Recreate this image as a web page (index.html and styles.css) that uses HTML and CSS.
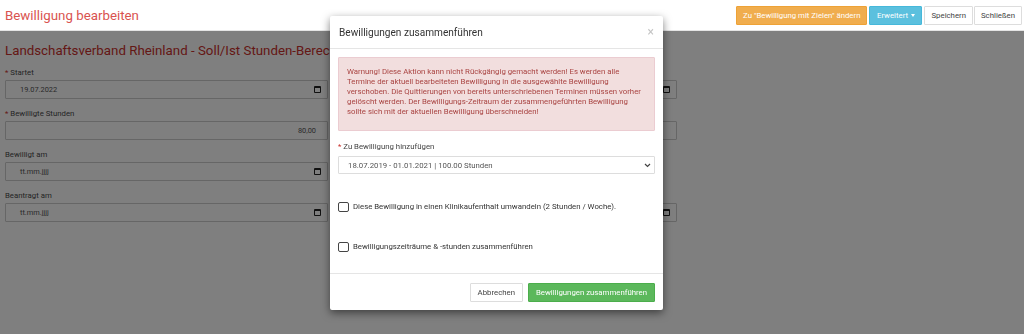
FILE: index.html
```html
<!DOCTYPE html>
<html lang="de">
<head>
<meta charset="utf-8">
<title>Bewilligung bearbeiten</title>
<link rel="stylesheet" href="styles.css">
</head>
<body>
<header class="topbar">
  <h1 class="page-title">Bewilligung bearbeiten</h1>
  <div class="btn-group">
    <button class="btn btn-warning">Zu "Bewilligung mit Zielen" ändern</button>
    <button class="btn btn-info">Erweitert <span class="caret"></span></button>
    <button class="btn btn-default">Speichern</button>
    <button class="btn btn-default">Schließen</button>
  </div>
</header>

<main class="content">
  <h2 class="section-title">Landschaftsverband Rheinland - Soll/Ist Stunden-Berechnung</h2>
  <div class="form-grid">
    <div class="form-col">
      <div class="field">
        <label class="field-label"><span class="req">*</span> Startet</label>
        <div class="input date"><span>19.07.2022</span><span class="cal"></span></div>
      </div>
      <div class="field">
        <label class="field-label"><span class="req">*</span> Bewilligte Stunden</label>
        <div class="input num"><span>80,00</span></div>
      </div>
      <div class="field">
        <label class="field-label">Bewilligt am</label>
        <div class="input date"><span>tt.mm.<u>jjjj</u></span><span class="cal"></span></div>
      </div>
      <div class="field">
        <label class="field-label">Beantragt am</label>
        <div class="input date"><span>tt.mm.<u>jjjj</u></span><span class="cal"></span></div>
      </div>
    </div>
    <div class="form-col">
      <div class="field">
        <label class="field-label">Endet</label>
        <div class="input date"><span>tt.mm.<u>jjjj</u></span><span class="cal"></span></div>
      </div>
      <div class="field">
        <label class="field-label">Verbrauchte Stunden</label>
        <div class="input num"><span></span></div>
      </div>
      <div class="field">
        <label class="field-label">&nbsp;</label>
        <div class="spacer"></div>
      </div>
      <div class="field">
        <label class="field-label">Genehmigt am</label>
        <div class="input date"><span>tt.mm.<u>jjjj</u></span><span class="cal"></span></div>
      </div>
    </div>
  </div>
</main>

<div class="backdrop"></div>

<div class="modal" role="dialog">
  <div class="modal-header">
    <h3 class="modal-title">Bewilligungen zusammenführen</h3>
    <span class="close">×</span>
  </div>
  <div class="modal-body">
    <div class="alert">Warnung! Diese Aktion kann nicht Rückgängig gemacht werden! Es werden alle Termine der aktuell bearbeiteten Bewilligung in die ausgewählte Bewilligung verschoben. Die Quittierungen von bereits unterschriebenen Terminen müssen vorher gelöscht werden. Der Bewilligungs-Zeitraum der zusammengeführten Bewilligung sollte sich mit der aktuellen Bewilligung überschneiden!</div>
    <label class="modal-label"><span class="req">*</span> Zu Bewilligung hinzufügen</label>
    <div class="select">
      <span>18.07.2019 - 01.01.2021 | 100.00 Stunden</span>
      <svg class="chev" width="7" height="5" viewBox="0 0 7 5"><path d="M1 1 L3.5 3.5 L6 1" fill="none" stroke="#444" stroke-width="1.2"/></svg>
    </div>
    <label class="check check-first"><span class="box"></span>Diese Bewilligung in einen Klinikaufenthalt umwandeln (2 Stunden / Woche).</label>
    <label class="check check-second"><span class="box"></span>Bewilligungszeiträume &amp; -stunden zusammenführen</label>
  </div>
  <div class="modal-footer">
    <button class="btn btn-default btn-lg">Abbrechen</button>
    <button class="btn btn-success btn-lg">Bewilligungen zusammenführen</button>
  </div>
</div>
</body>
</html>
```

FILE: styles.css
```css
* { box-sizing: border-box; }

html, body {
  margin: 0;
  padding: 0;
  background: #fff;
  font-family: Roboto, "Liberation Sans", Arial, sans-serif;
  color: #333;
  font-size: 7.8px;
}

.topbar {
  position: relative;
  z-index: 20;
  height: 31px;
  background: #fff;
  border-bottom: 1px solid #e4e4e4;
  display: flex;
  align-items: center;
  justify-content: space-between;
  padding: 0 2px 0 5px;
}

.page-title {
  margin: 0;
  font-weight: 400;
  font-size: 13.3px;
  color: #d9534f;
}

.btn-group {
  display: flex;
  gap: 2px;
}

.btn {
  font-family: inherit;
  font-size: 7.8px;
  height: 19px;
  padding: 0 6.5px;
  border: 1px solid transparent;
  border-radius: 1px;
  color: #fff;
  cursor: pointer;
  line-height: 17px;
}

.btn-warning { background: #f0ad4e; border-color: #eea236; padding: 0 6px; }
.btn-info { background: #5bc0de; border-color: #46b8da; padding: 0 6.5px; }
.btn-success { background: #5cb85c; border-color: #4cae4c; }
.btn-default { background: #fff; border-color: #ddd; color: #444; }
.btn-group .btn-default + .btn-default { margin-left: -1px; }
.btn-group .btn-default { padding: 0 6px; }

.caret {
  display: inline-block;
  width: 0;
  height: 0;
  margin-left: 1px;
  vertical-align: middle;
  border-top: 3px solid #fff;
  border-left: 2.5px solid transparent;
  border-right: 2.5px solid transparent;
}

.content {
  padding: 12px 0 0 5px;
}

.section-title {
  margin: 0 0 8px;
  font-size: 13.3px;
  line-height: 16px;
  font-weight: 400;
  color: #c9302c;
  white-space: nowrap;
}

.form-grid {
  display: grid;
  grid-template-columns: 323px 323px;
  column-gap: 26px;
}

.field {
  margin-bottom: 9px;
}

.field-label {
  display: block;
  font-size: 7.8px;
  font-weight: 400;
  color: #4a4a4a;
  line-height: 11px;
  margin-bottom: 2px;
}

.req { color: #c9302c; }

.input {
  height: 19px;
  border: 1px solid #ccc;
  border-radius: 1px;
  background: #fff;
  display: flex;
  align-items: center;
  justify-content: space-between;
  padding: 0 6px 0 14px;
  font-size: 7.4px;
  color: #555;
}

.input u { text-decoration-color: #3b7ddd; text-decoration-thickness: 3px; text-underline-offset: -3px; }

.input.num { justify-content: flex-end; padding-right: 11px; }

.spacer { height: 19px; }

.cal {
  width: 7px;
  height: 7px;
  border: 1px solid #222;
  border-top-width: 2px;
  border-radius: 1px;
}

.backdrop {
  position: fixed;
  top: 31px;
  left: 0;
  right: 0;
  bottom: 0;
  background: rgba(0, 0, 0, 0.5);
  z-index: 10;
}

.modal {
  position: absolute;
  z-index: 30;
  left: 330px;
  top: 16px;
  width: 333px;
  background: #fff;
  border-radius: 2px;
  box-shadow: 0 3px 9px rgba(0, 0, 0, 0.5);
}

.modal-header {
  height: 33px;
  border-bottom: 1px solid #e5e5e5;
  display: flex;
  align-items: center;
  justify-content: space-between;
  padding: 0 9px 0 9px;
}

.modal-title {
  margin: 0;
  font-size: 10.1px;
  font-weight: 400;
  color: #333;
}

.close {
  font-size: 12px;
  color: #c4c4c4;
  line-height: 1;
}

.modal-body {
  padding: 8px 8px 20px;
}

.alert {
  background: #f2dede;
  border: 1px solid #ebccd1;
  border-radius: 1px;
  color: #a94442;
  font-size: 7.8px;
  line-height: 10px;
  padding: 9px 8px 13px 8px;
  margin-bottom: 10px;
}

.modal-label {
  display: block;
  font-size: 7.8px;
  line-height: 12px;
  color: #444;
  margin-bottom: 3px;
}

.select {
  height: 18px;
  border: 1px solid #ddd;
  border-radius: 1px;
  display: flex;
  align-items: center;
  justify-content: space-between;
  padding: 0 3px 0 9px;
  font-size: 7.8px;
  color: #555;
}

.check {
  display: flex;
  align-items: center;
  font-size: 7.8px;
  line-height: 12px;
  color: #333;
}

.check-first { margin-top: 27px; }
.check-second { margin-top: 28px; }

.box {
  width: 11px;
  height: 10px;
  border: 1px solid #444;
  border-radius: 2px;
  margin-right: 4px;
  flex: none;
}

.modal-footer {
  border-top: 1px solid #e5e5e5;
  display: flex;
  justify-content: flex-end;
  gap: 5px;
  padding: 9px 8px 8px;
}

.btn-lg {
  height: 19px;
  font-size: 7.8px;
  padding: 0 7px;
}
```
